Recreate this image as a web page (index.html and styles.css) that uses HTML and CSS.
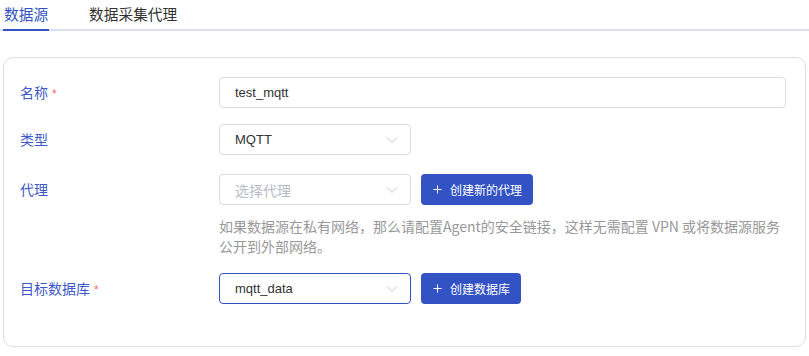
FILE: index.html
```html
<!DOCTYPE html>
<html lang="zh">
  <head>
    <meta charset="UTF-8" />
    <meta name="viewport" content="width=device-width, initial-scale=1.0" />
    <title>数据源</title>
    <link rel="stylesheet" href="styles.css">
  </head>
  <body>
    <nav class="tabs">
      <div class="tab active">数据源</div>
      <div class="tab">数据采集代理</div>
    </nav>

    <main class="card">
      <div class="form-row row-name">
        <label class="form-label">名称<span class="required">*</span></label>
        <div class="form-control">
          <div class="input wide">test_mqtt</div>
        </div>
      </div>

      <div class="form-row row-type">
        <label class="form-label">类型</label>
        <div class="form-control">
          <div class="input select">
            <span>MQTT</span>
            <svg class="chevron" viewBox="0 0 12 8" width="12" height="8"><path d="M1 1.5 L6 6.5 L11 1.5" fill="none" stroke="currentColor" stroke-width="1"/></svg>
          </div>
        </div>
      </div>

      <div class="form-row row-agent">
        <label class="form-label">代理</label>
        <div class="form-control">
          <div class="control-line">
            <div class="input select placeholder">
              <span>选择代理</span>
              <svg class="chevron" viewBox="0 0 12 8" width="12" height="8"><path d="M1 1.5 L6 6.5 L11 1.5" fill="none" stroke="currentColor" stroke-width="1"/></svg>
            </div>
            <button class="btn-primary">
              <svg class="plus" viewBox="0 0 10 10" width="10" height="10"><path d="M5 0.5 V9.5 M0.5 5 H9.5" stroke="currentColor" stroke-width="1.1"/></svg>
              <span>创建新的代理</span>
            </button>
          </div>
          <p class="help">如果数据源在私有网络，那么请配置Agent的安全链接，这样无需配置 VPN 或将数据源服务<br>公开到外部网络。</p>
        </div>
      </div>

      <div class="form-row row-db">
        <label class="form-label">目标数据库<span class="required">*</span></label>
        <div class="form-control">
          <div class="control-line">
            <div class="input select focused">
              <span>mqtt_data</span>
              <svg class="chevron" viewBox="0 0 12 8" width="12" height="8"><path d="M1 1.5 L6 6.5 L11 1.5" fill="none" stroke="currentColor" stroke-width="1"/></svg>
            </div>
            <button class="btn-primary">
              <svg class="plus" viewBox="0 0 10 10" width="10" height="10"><path d="M5 0.5 V9.5 M0.5 5 H9.5" stroke="currentColor" stroke-width="1.1"/></svg>
              <span>创建数据库</span>
            </button>
          </div>
        </div>
      </div>
    </main>
  </body>
</html>
```

FILE: styles.css
```css
/* Reset default styles */
* {
  margin: 0;
  padding: 0;
  box-sizing: border-box;
}

body {
  font-family: "Liberation Sans", "Noto Sans CJK SC", sans-serif;
  font-size: 14px;
  color: #333;
  background-color: #fff;
}

/* Tabs */
.tabs {
  display: flex;
  gap: 39px;
  height: 31px;
  padding-left: 3px;
  border-bottom: 2px solid #dde1ec;
}

.tab {
  font-family: "Noto Sans CJK SC", sans-serif;
  font-size: 14.7px;
  line-height: 28px;
  height: 31px;
  padding: 0 1px;
  color: #333;
}

.tab.active {
  color: #3352c4;
  border-bottom: 2px solid #3352c4;
}

/* Card with the form */
.card {
  margin: 26px 3px 0;
  border: 1px solid #dedfe3;
  border-radius: 10px;
  padding: 19px 19px 42px 16px;
}

.form-row {
  display: flex;
  align-items: flex-start;
}

.row-name {
  margin-bottom: 16px;
}

.row-type {
  margin-bottom: 19px;
}

.row-agent {
  margin-bottom: 17px;
}

.form-label {
  width: 199px;
  flex-shrink: 0;
  height: 31px;
  line-height: 31px;
  font-family: "Noto Sans CJK SC", sans-serif;
  color: #3d5ac6;
}

.required {
  color: #f56c6c;
  margin-left: 4px;
  font-family: "Liberation Sans", sans-serif;
  font-size: 12px;
}

.form-control {
  flex: 1;
}

.control-line {
  display: flex;
  gap: 10px;
}

.input {
  height: 31px;
  width: 192px;
  border: 1px solid #d9dce4;
  border-radius: 4px;
  padding: 0 12px 0 15px;
  display: flex;
  align-items: center;
  font-size: 13px;
  color: #333;
}

.input.wide {
  width: 100%;
}

.select {
  justify-content: space-between;
}

.placeholder {
  color: #b8bcc5;
  font-family: "Noto Sans CJK SC", sans-serif;
  font-size: 14px;
}

.focused {
  border-color: #3352c4;
}

.chevron {
  color: #c3c7cf;
}

.btn-primary {
  height: 31px;
  display: flex;
  align-items: center;
  gap: 8px;
  padding: 0 11px 0 12px;
  background-color: #3352c4;
  border: none;
  border-radius: 4px;
  color: #fff;
  font-family: "Noto Sans CJK SC", sans-serif;
  font-size: 12px;
}

.plus {
  width: 9px;
  height: 9px;
}

.help {
  margin-top: 11px;
  line-height: 20px;
  color: #999;
  font-family: "Noto Sans CJK SC", sans-serif;
}
```
